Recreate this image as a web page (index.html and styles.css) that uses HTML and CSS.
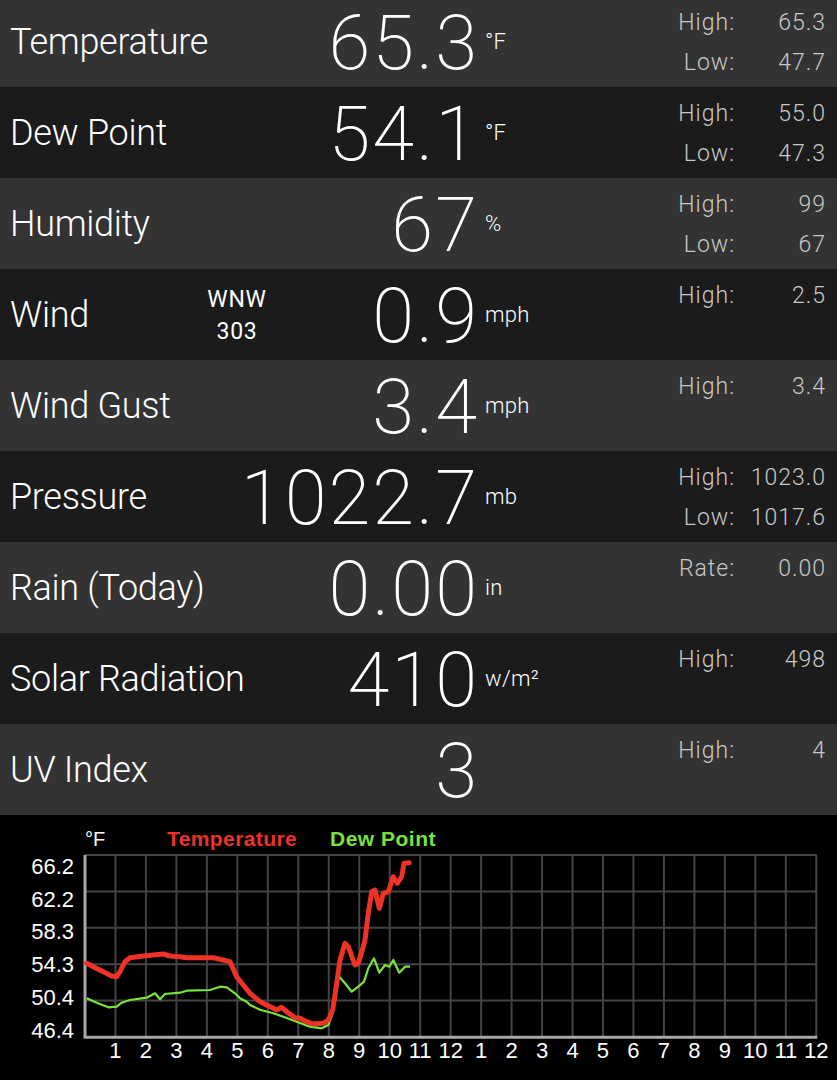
FILE: index.html
```html
<!DOCTYPE html>
<html>
<head>
<meta charset="utf-8">
<link rel="stylesheet" href="styles.css">
</head>
<body>
<div class="list">
  <div class="row light">
    <div class="name">Temperature</div>
    <div class="value">65.3</div>
    <div class="unit">°F</div>
    <div class="stats"><span class="k">High:</span><span class="v">65.3</span><span class="k">Low:</span><span class="v">47.7</span></div>
  </div>
  <div class="row dark">
    <div class="name">Dew Point</div>
    <div class="value">54.1</div>
    <div class="unit">°F</div>
    <div class="stats"><span class="k">High:</span><span class="v">55.0</span><span class="k">Low:</span><span class="v">47.3</span></div>
  </div>
  <div class="row light">
    <div class="name">Humidity</div>
    <div class="value">67</div>
    <div class="unit">%</div>
    <div class="stats"><span class="k">High:</span><span class="v">99</span><span class="k">Low:</span><span class="v">67</span></div>
  </div>
  <div class="row dark">
    <div class="name">Wind</div>
    <div class="dir">WNW<br>303</div>
    <div class="value">0.9</div>
    <div class="unit">mph</div>
    <div class="stats"><span class="k">High:</span><span class="v">2.5</span></div>
  </div>
  <div class="row light">
    <div class="name">Wind Gust</div>
    <div class="value">3.4</div>
    <div class="unit">mph</div>
    <div class="stats"><span class="k">High:</span><span class="v">3.4</span></div>
  </div>
  <div class="row dark">
    <div class="name">Pressure</div>
    <div class="value">1022.7</div>
    <div class="unit">mb</div>
    <div class="stats"><span class="k">High:</span><span class="v">1023.0</span><span class="k">Low:</span><span class="v">1017.6</span></div>
  </div>
  <div class="row light">
    <div class="name">Rain (Today)</div>
    <div class="value">0.00</div>
    <div class="unit">in</div>
    <div class="stats"><span class="k">Rate:</span><span class="v">0.00</span></div>
  </div>
  <div class="row dark">
    <div class="name">Solar Radiation</div>
    <div class="value">410</div>
    <div class="unit">w/m²</div>
    <div class="stats"><span class="k">High:</span><span class="v">498</span></div>
  </div>
  <div class="row light">
    <div class="name">UV Index</div>
    <div class="value">3</div>
    <div class="unit"></div>
    <div class="stats"><span class="k">High:</span><span class="v">4</span></div>
  </div>
</div>
<div class="chart">
  <svg class="chart-svg" width="837" height="265" viewBox="0 0 837 265">
    <path class="grid" d="M115.47 40V222M145.94 40V222M176.41 40V222M206.88 40V222M237.35 40V222M267.82 40V222M298.29 40V222M328.76 40V222M359.23 40V222M389.7 40V222M420.17 40V222M450.64 40V222M481.11 40V222M511.58 40V222M542.05 40V222M572.52 40V222M602.99 40V222M633.46 40V222M663.93 40V222M694.4 40V222M724.87 40V222M755.34 40V222M785.81 40V222M816.28 40V222M85 40H817M85 76.4H817M85 112.8H817M85 149.2H817M85 185.6H817"/>
    <path class="axis" d="M85 40V223.5M84 222.3H817.3"/>
    <polyline class="dew" points="86.7,183.3 96.7,187.7 108.3,192.3 116.7,191.7 121.7,187.7 130,185 146.7,182.7 155,178.3 160,184.3 165,179 180,177.7 186.7,175.7 210,175 220,171.7 226.7,172.3 235,178.3 240,183.3 246.7,186.7 250,190 260,194.7 273.3,198.3 283.3,201.7 296.7,206.7 310,211.7 321.7,213.3 328.3,210 332.7,198.3 336.7,165 339.3,161.7 345,168.3 351.7,176.7 358.3,171.7 364,166.7 368.3,153.3 374,143.3 379.3,157.7 385,150 389.3,151.7 393.3,145 399.3,157.7 405,151.7 410,151.7"/>
    <polyline class="temp" points="86.7,148.3 93.3,151.7 103.3,156.7 111.7,161 116.7,161.7 120,156.7 125,146.7 130,142.7 143.3,141 163.3,139 170,141 180,141.7 186.7,142.7 213.3,142.7 223.3,145 230,146.7 236.7,161.7 243.3,170 250,178.3 260,186.7 266.7,190 276.7,195 281.7,192.3 286.7,196.7 295,202.7 300,203.3 306.7,206.7 313.3,209 323.3,208.3 328.3,205 332.7,195 336.7,168.3 340,145 345,128.3 348.3,131.7 355,150 358.3,148.3 363.3,131.7 365,125 368.3,98.3 371.7,76.7 375,75 379.3,93.3 383.3,78.3 388.3,76.7 393.3,61.7 397.3,68.3 401.7,61.7 404,48.3 409.3,47.7"/>
    <text class="lbl" x="85" y="31">°F</text>
    <text class="leg-t" x="167" y="31">Temperature</text>
    <text class="leg-d" x="330" y="31">Dew Point</text>
    <g class="ylab">
      <text x="74" y="59">66.2</text>
      <text x="74" y="92">62.2</text>
      <text x="74" y="124">58.3</text>
      <text x="74" y="157">54.3</text>
      <text x="74" y="190">50.4</text>
      <text x="74" y="223">46.4</text>
    </g>
    <g class="xlab">
      <text x="115.47" y="243">1</text>
      <text x="145.94" y="243">2</text>
      <text x="176.41" y="243">3</text>
      <text x="206.88" y="243">4</text>
      <text x="237.35" y="243">5</text>
      <text x="267.82" y="243">6</text>
      <text x="298.29" y="243">7</text>
      <text x="328.76" y="243">8</text>
      <text x="359.23" y="243">9</text>
      <text x="389.7" y="243">10</text>
      <text x="420.17" y="243">11</text>
      <text x="450.64" y="243">12</text>
      <text x="481.11" y="243">1</text>
      <text x="511.58" y="243">2</text>
      <text x="542.05" y="243">3</text>
      <text x="572.52" y="243">4</text>
      <text x="602.99" y="243">5</text>
      <text x="633.46" y="243">6</text>
      <text x="663.93" y="243">7</text>
      <text x="694.4" y="243">8</text>
      <text x="724.87" y="243">9</text>
      <text x="755.34" y="243">10</text>
      <text x="785.81" y="243">11</text>
      <text x="816.28" y="243">12</text>
    </g>
  </svg>
</div>
</body>
</html>
```

FILE: styles.css
```css
* { box-sizing: border-box; }
html, body { margin: 0; padding: 0; }
body {
  background: #000;
  color: #fff;
  font-family: Roboto, "Liberation Sans", Arial, sans-serif;
  width: 837px;
  height: 1080px;
  overflow: hidden;
}
.list { margin-top: -4px; }
.row {
  display: grid;
  grid-template-columns: 172px 110px 185px 90px 1fr;
  height: 91px;
  padding: 0 11px 0 10px;
  align-items: center;
}
.row.light { background: #333333; }
.row.dark { background: #1b1b1b; }
.name {
  grid-column: 1 / 4;
  grid-row: 1;
  font-size: 36px;
  font-weight: 300;
  line-height: 1;
  letter-spacing: -0.3px;
  white-space: nowrap;
}
.dir {
  grid-column: 2;
  grid-row: 1;
  text-align: center;
  font-size: 23px;
  line-height: 32px;
  letter-spacing: 0.8px;
  margin-top: 2px;
}
.value {
  grid-column: 1 / 4;
  grid-row: 1;
  justify-self: end;
  font-size: 76px;
  font-weight: 200;
  line-height: 1;
  letter-spacing: 2px;
  margin-right: -2px;
  margin-top: 3px;
}
.unit {
  grid-column: 4;
  grid-row: 1;
  padding-left: 8px;
  font-size: 22px;
  font-weight: 300;
  line-height: 1;
  letter-spacing: 0.3px;
}
.stats {
  grid-column: 5;
  grid-row: 1;
  align-self: start;
  padding-top: 7px;
  display: grid;
  grid-template-columns: 1fr 91px;
  font-size: 23px;
  line-height: 40px;
  font-weight: 300;
  color: #c8c8c8;
  letter-spacing: 1px;
}
.stats .k, .stats .v { text-align: right; }
.chart { height: 265px; background: #000; }
.chart-svg { display: block; }
.grid { stroke: #444; stroke-width: 2; fill: none; }
.axis { stroke: #a8a8a8; stroke-width: 3; fill: none; }
.temp { stroke: #ee3326; stroke-width: 5; fill: none; stroke-linejoin: round; stroke-linecap: round; }
.dew { stroke: #79e33c; stroke-width: 2.2; fill: none; stroke-linejoin: round; }
.chart-svg text { font-family: "Liberation Sans", Arial, sans-serif; fill: #fff; font-size: 22px; }
.chart-svg .lbl { font-size: 20px; }
.chart-svg .leg-t { fill: #ee3326; font-weight: bold; font-size: 21px; letter-spacing: 0.4px; }
.chart-svg .leg-d { fill: #79e33c; font-weight: bold; font-size: 21px; letter-spacing: 0.5px; }
.ylab text { text-anchor: end; }
.xlab text { text-anchor: middle; }
```
